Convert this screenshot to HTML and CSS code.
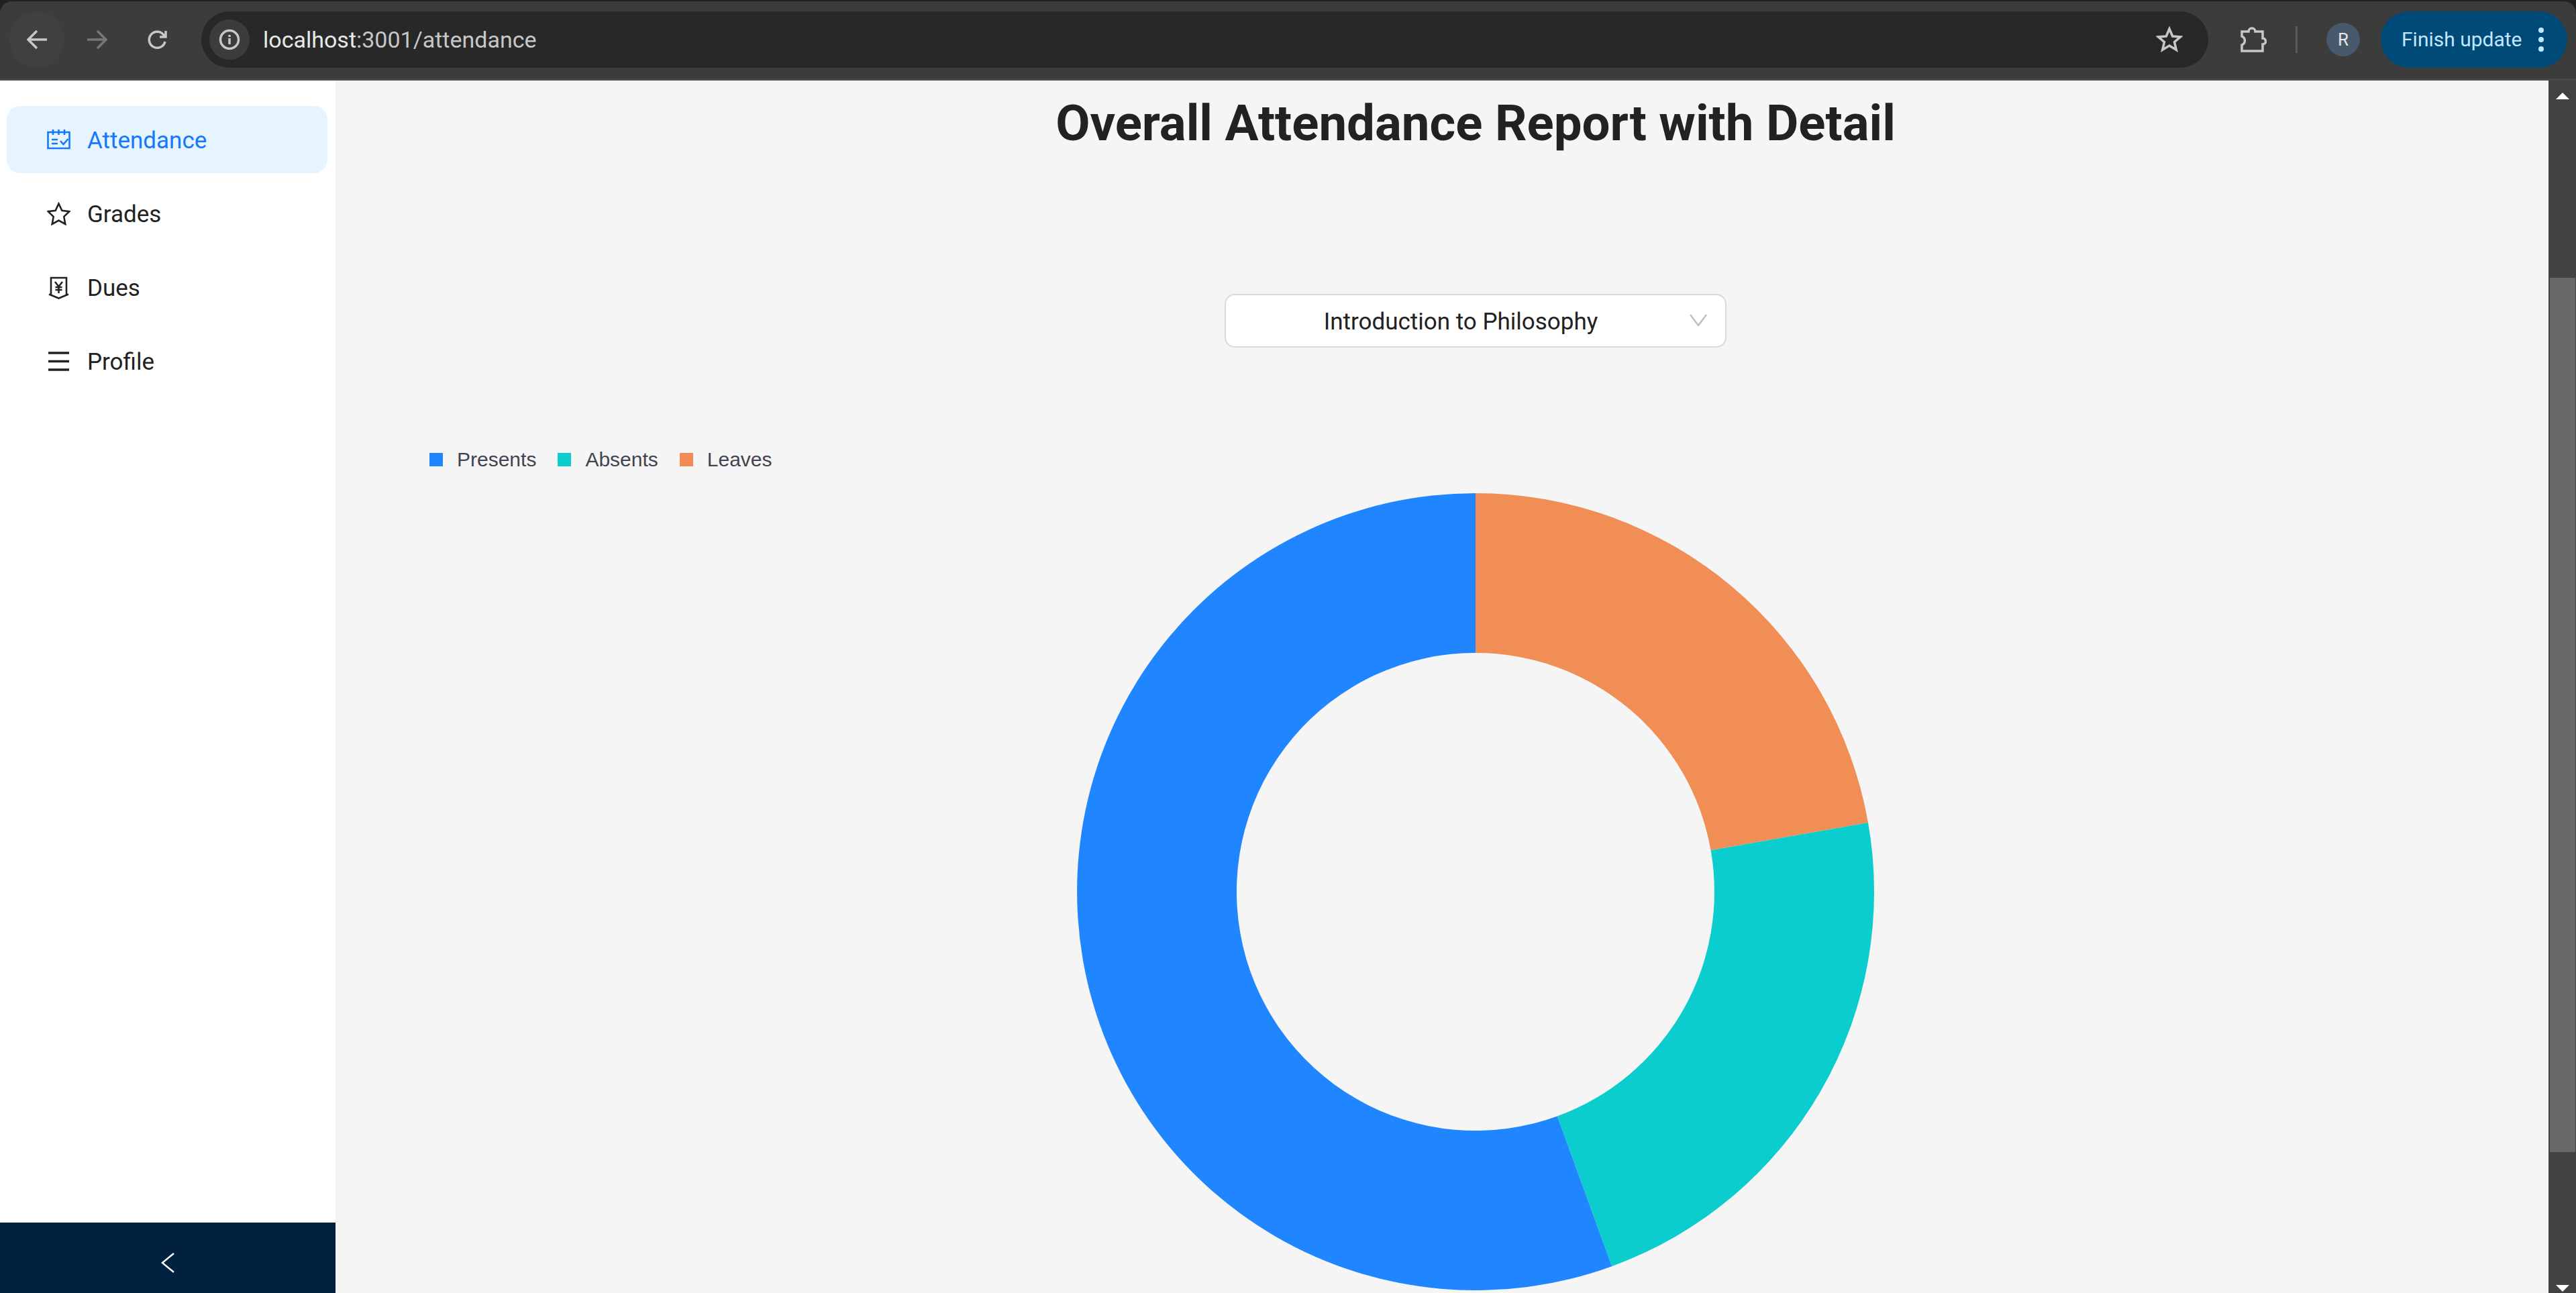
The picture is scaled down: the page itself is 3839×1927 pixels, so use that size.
FILE: index.html
```html
<!DOCTYPE html>
<html lang="en">
<head>
    <meta charset="UTF-8">
    <meta name="viewport" content="width=device-width, initial-scale=1.0">
    <title>Attendance</title>
    <link rel="stylesheet" href="styles.css">
</head>
<body>
    <!-- browser toolbar -->
    <div class="toolbar">
        <div class="nav-btns">
            <span class="nav-btn nav-hover">
                <svg class="ic-30" viewBox="0 0 30 30"><path d="M30 15H2M15 2 2 15l13 13" class="st-light"/></svg>
            </span>
            <span class="nav-btn">
                <svg class="ic-30" viewBox="0 0 30 30"><path d="M0 15h28M15 2l13 13-13 13" class="st-dim"/></svg>
            </span>
            <span class="nav-btn">
                <svg class="ic-32" viewBox="0 0 32 32"><path d="M27 19a12 12 0 1 1-3-11l4 4M28 3v9h-9" class="st-light"/></svg>
            </span>
        </div>
        <div class="omnibox">
            <span class="site-info">
                <svg class="ic-32" viewBox="0 0 32 32"><circle cx="16" cy="16" r="13.5" class="st-light"/><path d="M16 14v9M16 9v3" class="st-light"/></svg>
            </span>
            <span class="url"><span class="url-host">localhost</span>:3001/attendance</span>
            <svg class="bookmark" viewBox="0 0 40 40"><path d="m20 4 4.700 11 11.800 1-9 7.700 2.800 11.600L20 29.100l-10.300 6.200 2.800-11.600-9-7.700 11.800-1z" class="st-light"/></svg>
        </div>
        <svg class="ext-icon" viewBox="0 0 40 40"><path d="M3 8h10a5 5 0 0 1 10 0h11v10a4.500 4.500 0 0 1 0 9v10H3V28a7 7 0 0 0 0-13z" class="st-light"/></svg>
        <span class="tb-sep"></span>
        <span class="avatar">R</span>
        <div class="update-pill">
            <span>Finish update</span>
            <span class="dots"><i></i><i></i><i></i></span>
        </div>
    </div>

    <div class="app">
        <aside class="sider">
            <ul class="menu">
                <li class="menu-item active">
                    <svg class="menu-icon" viewBox="0 0 35 35">
                        <path d="M1.500 6h32v24h-32zM9 2v8M17.500 2v8M26 2v8M7 17h9M7 23h9M20 19l4.500 5 7-8" class="st-icon"/>
                    </svg>
                    <span class="menu-label">Attendance</span>
                </li>
                <li class="menu-item">
                    <svg class="menu-icon" viewBox="0 0 35 35">
                        <path d="m17.500 2.500 4.800 10.200 11 1.400-8 7.800 2 11.100-9.800-5.400-9.800 5.400 2-11.100-8-7.800 11-1.400z" class="st-icon"/>
                    </svg>
                    <span class="menu-label">Grades</span>
                </li>
                <li class="menu-item">
                    <svg class="menu-icon" viewBox="0 0 35 35">
                        <path d="M6 28V3h23v25M3 27.500l14.500 6 14.500-6M12 9l5.500 7 5.500-7M17.500 16v10M12.500 17h10M12.500 21h10" class="st-icon"/>
                    </svg>
                    <span class="menu-label">Dues</span>
                </li>
                <li class="menu-item">
                    <svg class="menu-icon" viewBox="0 0 35 35">
                        <path d="M2 5h31M2 17.500h31M2 30h31" class="st-icon st-thick"/>
                    </svg>
                    <span class="menu-label">Profile</span>
                </li>
            </ul>
            <div class="trigger">
                <svg class="trigger-icon" viewBox="0 0 20 30"><path d="M19 1 2 15l17 14" class="st-white"/></svg>
            </div>
        </aside>

        <main class="content">
            <h1 class="page-title">Overall Attendance Report with Detail</h1>
            <div class="select-box">
                <span class="select-text">Introduction to Philosophy</span>
                <svg class="select-arrow" viewBox="0 0 26 18"><path d="M1 1l12 16L25 1" class="st-arrow"/></svg>
            </div>
            <div class="legend">
                <span class="legend-item"><i class="swatch sw-blue"></i>Presents</span>
                <span class="legend-item"><i class="swatch sw-teal"></i>Absents</span>
                <span class="legend-item"><i class="swatch sw-orange"></i>Leaves</span>
            </div>
            <svg class="donut" viewBox="0 0 1200 1200">
                <path class="sw-orange-fill" d="M600 6A594 594 0 0 1 1185 496.900L950.600 538.200A356 356 0 0 0 600 244Z"/>
                <path class="sw-teal-fill" d="M1185 496.900A594 594 0 0 1 803.200 1158.200L721.800 934.500A356 356 0 0 0 950.600 538.200Z"/>
                <path class="sw-blue-fill" d="M803.200 1158.200A594 594 0 1 1 600 6L600 244A356 356 0 1 0 721.800 934.500Z"/>
            </svg>
        </main>

        <div class="scrollbar">
            <span class="sb-arrow sb-up"></span>
            <span class="sb-thumb"></span>
            <span class="sb-arrow sb-down"></span>
        </div>
    </div>
</body>
</html>
```

FILE: styles.css
```css
* {
  box-sizing: border-box;
}
html, body {
  margin: 0;
  height: 100%;
  overflow: hidden;
}
body {
  display: flex;
  flex-direction: column;
  background: #202124;
  font-family: Roboto, "Open Sans", sans-serif;
}

/* svg strokes */
svg path, svg circle {
  fill: none;
}
.st-light { stroke: #c7c7c7; stroke-width: 3.5; }
.st-dim { stroke: #777; stroke-width: 3.5; }
.st-icon { stroke: currentColor; stroke-width: 2.6; }
.st-thick { stroke-width: 3.5; }
.st-white { stroke: #fff; stroke-width: 2.5; }
.st-arrow { stroke: #bfbfbf; stroke-width: 2.5; }

/* toolbar */
.toolbar {
  height: 118px;
  flex: none;
  margin-top: 2px;
  padding: 14px 15px 16px 14px;
  display: flex;
  align-items: center;
  background: #3c3c3c;
  border-radius: 18px 18px 0 0;
  border-bottom: 3px solid #474747;
}
.nav-btns {
  display: flex;
  width: 286px;
  flex: none;
}
.nav-btn {
  width: 90px;
  height: 84px;
  display: flex;
  align-items: center;
  justify-content: center;
  border-radius: 50%;
}
.nav-hover {
  width: 82px;
  margin-right: 4px;
  background: #404040;
}
.ic-30 { width: 30px; height: 30px; }
.ic-32 { width: 32px; height: 32px; }
.omnibox {
  flex: none;
  width: 2991px;
  height: 84px;
  background: #282828;
  border-radius: 42px;
  display: flex;
  align-items: center;
  padding: 0 38px 0 12px;
}
.site-info {
  width: 60px;
  height: 60px;
  background: #3c3c3c;
  border-radius: 50%;
  display: flex;
  align-items: center;
  justify-content: center;
}
.url {
  margin-left: 20px;
  font-size: 34px;
  color: #c7c7c7;
  flex: 1;
}
.url-host {
  color: #e8e8e8;
}
.bookmark {
  width: 40px;
  height: 40px;
}
.ext-icon {
  width: 40px;
  height: 40px;
  margin-left: 47px;
  flex: none;
}
.tb-sep {
  width: 3px;
  height: 40px;
  margin-left: 43px;
  background: #5a5a5a;
  flex: none;
}
.avatar {
  width: 50px;
  height: 50px;
  margin-left: 43px;
  flex: none;
  border-radius: 50%;
  background: #47596a;
  color: #e6e6e6;
  font-size: 26px;
  display: flex;
  align-items: center;
  justify-content: center;
}
.update-pill {
  width: 278px;
  height: 84px;
  margin-left: 31px;
  flex: none;
  background: #004a77;
  color: #c2e7ff;
  border-radius: 42px;
  font-size: 30px;
  display: flex;
  align-items: center;
  padding-left: 31px;
}
.dots {
  display: flex;
  flex-direction: column;
  gap: 6px;
  margin-left: 24px;
}
.dots i {
  width: 8px;
  height: 8px;
  border-radius: 50%;
  background: #c2e7ff;
}

/* page */
.app {
  flex: 1;
  display: flex;
  min-height: 0;
  background: #f5f5f5;
}
.sider {
  width: 500px;
  flex: none;
  display: flex;
  flex-direction: column;
  background: #fff;
}
.menu {
  list-style: none;
  margin: 0;
  padding: 38px 10px 0;
  flex: 1;
}
.menu-item {
  height: 100px;
  margin-bottom: 10px;
  padding-left: 60px;
  width: 478px;
  border-radius: 20px;
  display: flex;
  align-items: center;
  font-size: 35px;
  color: #222;
}
.menu-item.active {
  background: #e6f4ff;
  color: #1677ff;
}
.menu-icon {
  width: 35px;
  height: 35px;
  margin-right: 25px;
  flex: none;
}
.menu-label {
  padding-top: 3px;
}
.trigger {
  height: 105px;
  padding-top: 15px;
  background: #002140;
  display: flex;
  align-items: center;
  justify-content: center;
}
.trigger-icon {
  width: 20px;
  height: 30px;
}

.content {
  flex: 1;
  min-width: 0;
  padding-left: 100px;
  display: flex;
  flex-direction: column;
  align-items: center;
  overflow: hidden;
}
.page-title {
  margin: 14px 0 0;
  font-size: 74.4px;
  line-height: 100px;
  font-weight: 700;
  color: #222;
  white-space: nowrap;
}
.select-box {
  width: 748px;
  height: 80px;
  margin-top: 204px;
  flex: none;
  background: #fff;
  border: 2.5px solid #d9d9d9;
  border-radius: 15px;
  display: flex;
  align-items: center;
  position: relative;
  justify-content: center;
  padding-right: 44px;
  font-size: 35px;
  color: #222;
}
.select-text {
  padding-top: 3px;
}
.select-arrow {
  position: absolute;
  right: 27px;
  top: 28px;
  width: 26px;
  height: 18px;
}
.legend {
  align-self: flex-start;
  margin: 147px 0 0 40px;
  display: flex;
  font-family: "Liberation Sans", Arial, sans-serif;
  font-size: 30px;
  color: #3f4550;
  flex: none;
  line-height: 40px;
}
.legend-item {
  display: flex;
  align-items: center;
  margin-right: 32px;
}
.swatch {
  width: 20px;
  height: 20px;
  margin-right: 21px;
}
.sw-blue { background: #1e84ff; }
.sw-teal { background: #0bcdcd; }
.sw-orange { background: #f28c52; }
svg .sw-blue-fill { fill: #2086ff; }
svg .sw-teal-fill { fill: #0bcdcd; }
svg .sw-orange-fill { fill: #f18e55; }
.donut {
  width: 1200px;
  height: 1200px;
  flex: none;
  margin-top: 24px;
}

/* fake window scrollbar */
.scrollbar {
  width: 41px;
  flex: none;
  background: #424242;
  display: flex;
  flex-direction: column;
  align-items: center;
  position: relative;
  padding-top: 18px;
}
.sb-arrow {
  width: 0;
  height: 0;
  border-left: 10px solid transparent;
  border-right: 10px solid transparent;
}
.sb-up {
  border-bottom: 10px solid #fff;
}
.sb-thumb {
  width: 38px;
  height: 1303px;
  margin-top: 266px;
  margin-left: 1px;
  background: #686868;
  flex: none;
}
.sb-down {
  margin-top: auto;
  margin-bottom: 2px;
  border-top: 10px solid #fff;
}
```
